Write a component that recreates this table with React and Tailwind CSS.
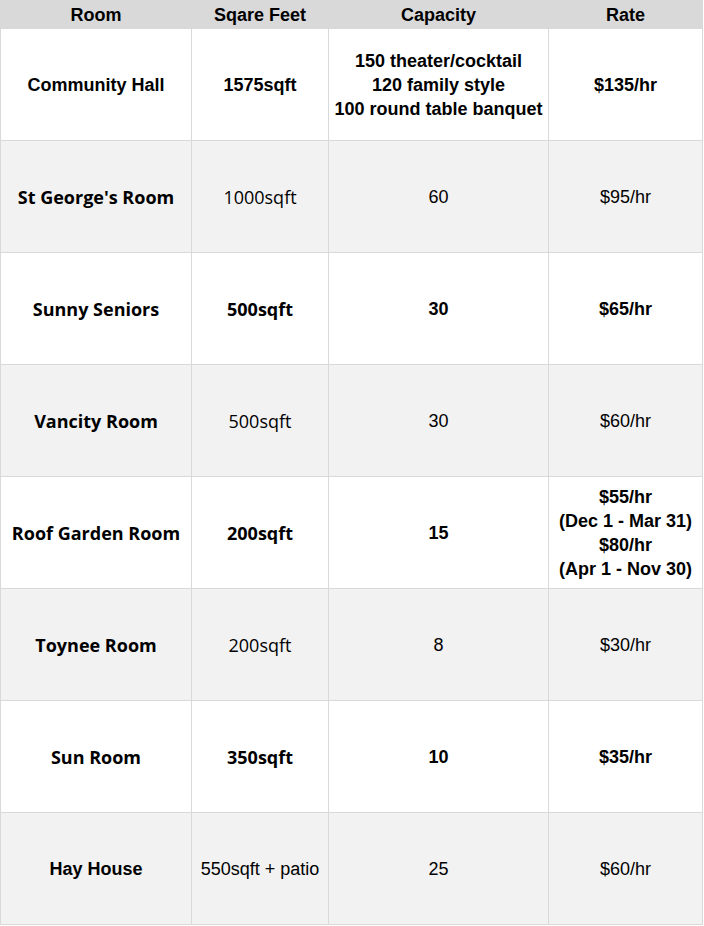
import React from 'react';

const ARIAL = 'font-["Liberation_Sans",Arial,sans-serif]';
const SEGOE = 'font-["Open_Sans","Noto_Sans",sans-serif]';

// each cell: [text lines, font class, weight class]
const rows = [
  {
    shade: false,
    cells: [
      [['Community Hall'], ARIAL, 'font-bold'],
      [['1575sqft'], ARIAL, 'font-bold'],
      [['150 theater/cocktail', '120 family style', '100 round table banquet'], ARIAL, 'font-bold'],
      [['$135/hr'], ARIAL, 'font-bold'],
    ],
  },
  {
    shade: true,
    cells: [
      [["St George's Room"], SEGOE, 'font-bold'],
      [['1000sqft'], SEGOE, 'font-normal'],
      [['60'], ARIAL, 'font-normal'],
      [['$95/hr'], ARIAL, 'font-normal'],
    ],
  },
  {
    shade: false,
    cells: [
      [['Sunny Seniors'], SEGOE, 'font-bold'],
      [['500sqft'], SEGOE, 'font-bold'],
      [['30'], ARIAL, 'font-bold'],
      [['$65/hr'], ARIAL, 'font-bold'],
    ],
  },
  {
    shade: true,
    cells: [
      [['Vancity Room'], SEGOE, 'font-bold'],
      [['500sqft'], SEGOE, 'font-normal'],
      [['30'], ARIAL, 'font-normal'],
      [['$60/hr'], ARIAL, 'font-normal'],
    ],
  },
  {
    shade: false,
    cells: [
      [['Roof Garden Room'], SEGOE, 'font-bold'],
      [['200sqft'], SEGOE, 'font-bold'],
      [['15'], ARIAL, 'font-bold'],
      [['$55/hr', '(Dec 1 - Mar 31)', '$80/hr', '(Apr 1 - Nov 30)'], ARIAL, 'font-bold'],
    ],
  },
  {
    shade: true,
    cells: [
      [['Toynee Room'], SEGOE, 'font-bold'],
      [['200sqft'], SEGOE, 'font-normal'],
      [['8'], ARIAL, 'font-normal'],
      [['$30/hr'], ARIAL, 'font-normal'],
    ],
  },
  {
    shade: false,
    cells: [
      [['Sun Room'], SEGOE, 'font-bold'],
      [['350sqft'], SEGOE, 'font-bold'],
      [['10'], ARIAL, 'font-bold'],
      [['$35/hr'], ARIAL, 'font-bold'],
    ],
  },
  {
    shade: true,
    cells: [
      [['Hay House'], ARIAL, 'font-bold'],
      [['550sqft + patio'], ARIAL, 'font-normal'],
      [['25'], ARIAL, 'font-normal'],
      [['$60/hr'], ARIAL, 'font-normal'],
    ],
  },
];

const widths = ['w-[191px]', 'w-[137px]', 'w-[220px]', 'w-[154px]'];
const headers = ['Room', 'Sqare Feet', 'Capacity', 'Rate'];

export default function App() {
  return (
    <div className="bg-white w-[704px] h-[926px]">
      <table className="border-collapse table-fixed w-[703px] text-black">
        <thead>
          <tr className="bg-[#d9d9d9] h-[28px]">
            {headers.map((h, i) => (
              <th
                key={h}
                className={`${widths[i]} border border-[#d9d9d9] ${ARIAL} font-bold text-[18px] leading-[22px] p-0 text-center`}
              >
                {h}
              </th>
            ))}
          </tr>
        </thead>
        <tbody>
          {rows.map((row, r) => (
            <tr key={r} className={`h-[112px] ${row.shade ? 'bg-[#f2f2f2]' : 'bg-white'}`}>
              {row.cells.map(([lines, font, weight], c) => (
                <td
                  key={c}
                  className={`border border-[#d9d9d9] p-0 text-center align-middle text-[18px] leading-[24px] whitespace-nowrap ${font} ${weight}`}
                >
                  {lines.map((l, i) => (
                    <div key={i}>{l}</div>
                  ))}
                </td>
              ))}
            </tr>
          ))}
        </tbody>
      </table>
    </div>
  );
}
